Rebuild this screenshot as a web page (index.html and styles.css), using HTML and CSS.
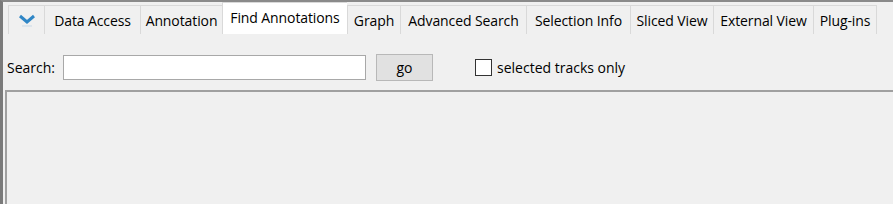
FILE: index.html
```html
<!DOCTYPE html>
<html>
<head>
<meta charset="utf-8">
<link rel="stylesheet" href="styles.css">
</head>
<body>
<div class="frame">
  <div class="tabbar">
    <div class="tab icon-tab">
      <svg width="18" height="14" viewBox="0 0 18 14">
        <path d="M2 3 L9 9 L16 3" fill="none" stroke="#2f86c6" stroke-width="3" stroke-linejoin="miter"/>
        <line x1="4" y1="13" x2="14" y2="13" stroke="#c9d9e6" stroke-width="1"/>
      </svg>
    </div>
    <div class="tab w-data">Data Access</div>
    <div class="tab w-annot">Annotation</div>
    <div class="tab active w-find">Find Annotations</div>
    <div class="tab w-graph">Graph</div>
    <div class="tab w-adv">Advanced Search</div>
    <div class="tab w-sel">Selection Info</div>
    <div class="tab w-sliced">Sliced View</div>
    <div class="tab w-ext">External View</div>
    <div class="tab w-plug">Plug-ins</div>
  </div>
  <div class="content">
    <div class="search-row">
      <label class="search-label">Search:</label>
      <input class="search-input" type="text">
      <button class="go-btn">go</button>
      <label class="check-label"><span class="checkbox"></span>selected tracks only</label>
    </div>
    <div class="results"></div>
  </div>
</div>
</body>
</html>
```

FILE: styles.css
```css
html, body {
  margin: 0;
  padding: 0;
  background: #f0f0f0;
  font-family: "Open Sans", "Noto Sans", sans-serif;
  font-size: 14px;
  color: #000;
}
.frame {
  width: 893px;
  height: 204px;
  box-sizing: border-box;
  border-top: 2px solid #8a8a8a;
  border-left: 3px solid #7a7a7a;
  display: flex;
  flex-direction: column;
  overflow: hidden;
}
.tabbar {
  display: flex;
  align-items: flex-end;
  height: 32px;
  padding-left: 5px;
  background: #f0f0f0;
}
.tab {
  height: 29px;
  box-sizing: border-box;
  border: 1px solid #d9d9d9;
  border-bottom: none;
  border-right: none;
  background: #f0f0f0;
  display: flex;
  align-items: center;
  justify-content: center;
  padding: 0;
  white-space: nowrap;
  letter-spacing: -0.1px;
}
.tab:last-child { border-right: 1px solid #d9d9d9; }
.icon-tab { width: 36px; }
.w-data { width: 96px; }
.w-annot { width: 82px; }
.w-find { width: 125px; }
.w-graph { width: 53px; }
.w-adv { width: 126px; }
.w-sel { width: 104px; }
.w-sliced { width: 83px; }
.w-ext { width: 100px; }
.w-plug { width: 64px; }
.tab.active {
  background: #fff;
  height: 32px;
  padding-bottom: 3px;
}
.content {
  flex: 1;
  background: #f0f0f0;
  display: flex;
  flex-direction: column;
}
.search-row {
  display: flex;
  align-items: center;
  height: 46px;
  padding-top: 10px;
  padding-left: 4px;
}
.search-label { width: 56px; }
.search-input {
  width: 303px;
  height: 25px;
  box-sizing: border-box;
  border: 1px solid #a8a8a8;
  background: #fff;
  margin: 0;
}
.go-btn {
  margin-left: 10px;
  width: 57px;
  height: 27px;
  box-sizing: border-box;
  border: 1px solid #b8b8b8;
  background: #e1e1e1;
  font-family: inherit;
  font-size: 14px;
  padding: 0;
}
.check-label {
  margin-left: 42px;
  display: flex;
  align-items: center;
}
.checkbox {
  width: 17px;
  height: 17px;
  box-sizing: border-box;
  border: 1px solid #333;
  background: #fff;
  margin-right: 5px;
}
.results {
  flex: 1;
  margin-left: 2px;
  border-top: 2px solid #a0a0a0;
  border-left: 2px solid #a0a0a0;
  background: #f0f0f0;
}
```
